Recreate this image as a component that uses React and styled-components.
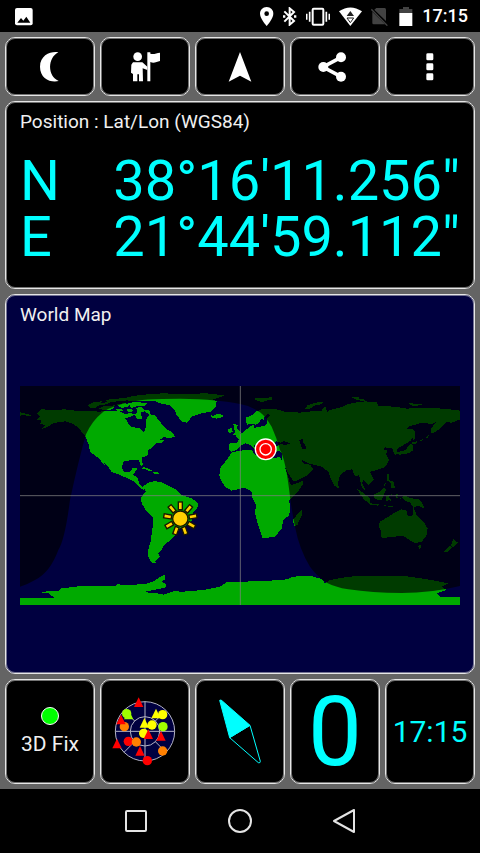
import React from 'react';
import styled, { createGlobalStyle, css } from 'styled-components';

const colors = {
  black: '#000',
  white: '#fff',
  text: '#f0f0f0',
  frame: '#646464',
  border: '#e6e6e6',
  cyan: '#0ff',
  navy: '#000040',
  land: '#00aa00',
  dim: '#424242'
};
const fonts = { Roboto: "Roboto, 'Open Sans', sans-serif" };

const GlobalStyle = createGlobalStyle`
  *, *::before, *::after { box-sizing: border-box; }
  body {
    margin: 0;
    background: ${colors.black};
    color: ${colors.text};
    font-family: ${fonts.Roboto};
  }
  button {
    padding: 0;
    border: 0;
    background: none;
    color: inherit;
    font: inherit;
    cursor: pointer;
  }
`;

const Screen = styled.div`
  display: flex;
  flex-direction: column;
  min-height: 100vh;
`;
const StatusBar = styled.header`
  display: flex;
  align-items: center;
  justify-content: space-between;
  height: 32px;
  padding: 0 12px 0 15px;
`;
const StatusIcons = styled.div`
  display: flex;
  align-items: center;
  gap: 9px;
`;
const Clock = styled.time`
  color: ${colors.white};
  font-size: 18px;
  font-weight: 500;
  line-height: 24px;
`;
const Main = styled.main`
  display: flex;
  flex-direction: column;
  flex: 1;
  gap: 5px;
  padding: 5px;
  background: ${colors.frame};
`;
const Row = styled.div`
  display: grid;
  grid-template-columns: repeat(5, 1fr);
  gap: 5px;
`;
const frame = css`
  border: 1px solid ${colors.border};
  border-radius: 10px;
  box-shadow: inset 0 0 0 1px rgba(230, 230, 230, 0.5);
`;
const Tile = styled.button`
  && {
    ${frame};
    display: flex;
    flex-direction: column;
    align-items: center;
    justify-content: center;
    height: ${props => (props.$tall ? 105 : 59)}px;
    background: ${colors.black};
  }
`;
const Panel = styled.section`
  ${frame};
  display: flex;
  flex-direction: column;
  flex: ${props => (props.$grow ? 1 : 'none')};
  padding: ${props => (props.$grow ? '8px 14px 9px' : '8px 14px 23px')};
  background: ${props => (props.$grow ? colors.navy : colors.black)};
`;
const Title = styled.h2`
  margin: 0;
  font-size: 19px;
  font-weight: 400;
  line-height: 24px;
`;
const Coordinates = styled.div`
  margin-top: 19px;
`;
const Coordinate = styled.div`
  display: flex;
  justify-content: space-between;
  color: ${colors.cyan};
  font-size: 56px;
  line-height: 56px;
`;
const MapArea = styled.div`
  display: flex;
  flex: 1;
  align-items: center;
  svg {
    display: block;
    width: 100%;
    height: auto;
  }
`;
const FixDot = styled.span`
  width: 18px;
  height: 18px;
  border: 1px solid ${colors.white};
  border-radius: 50%;
  background: #0f0;
`;
const FixLabel = styled.span`
  margin-top: 7px;
  font-size: 21px;
  line-height: 24px;
`;
const Value = styled.span`
  color: ${colors.cyan};
  font-size: ${props => (props.$large ? 96 : 30)}px;
  line-height: 1;
`;
const NavBar = styled.nav`
  display: flex;
  align-items: center;
  justify-content: center;
  gap: 80px;
  height: 64px;
  button {
    display: flex;
  }
`;

const StatusIcon = ({ width, x, children }) => (
  <svg width={width} height="19" viewBox={`${x} 18 ${width * 3} 57`} aria-hidden="true">
    {children}
  </svg>
);

const ToolIcon = ({ children }) => (
  <svg width="36" height="36" viewBox="-9 -9 108 108" fill={colors.white} aria-hidden="true">
    {children}
  </svg>
);

const tools = [
  {
    name: 'Night mode',
    icon: <path d="M70 1C50-3 15 8 15 44s32 49 56 43C37 72 37 18 70 1Z" />
  },
  {
    name: 'Waypoints',
    icon: (
      <g>
        <circle cx="23" cy="14" r="13" />
        <path d="M9 31H37L52 44V54L38 49L39 88H27V67H22V88H9V66L3 62L4 38Z" />
        <path d="M52 1h9v4c10 4 18-2 29-3v25c-10 2-18 8-29 3v58h-9Z" />
      </g>
    )
  },
  { name: 'Navigate', icon: <path d="M45 0L79 89L45 71L11 89Z" /> },
  {
    name: 'Share',
    icon: (
      <g>
        <path d="M63 16L9 45L63 74" fill="none" stroke={colors.white} strokeWidth="11" />
        <circle cx="63" cy="16" r="15" />
        <circle cx="10" cy="45" r="15" />
        <circle cx="63" cy="74" r="15" />
      </g>
    )
  },
  {
    name: 'Menu',
    icon: [4, 34, 64].map(y => <rect key={y} x="34" y={y} width="21" height="21" rx="4" />)
  }
];

const lands = [
  // North America
  'M50 82L65 70L100 72L135 70L165 74L200 74L235 77L265 75L300 76L318 86L330 80L345 86L352 76L348 66L362 62L372 72L392 74L388 84L404 88L418 104L424 112L440 130L455 137L466 152L445 157L432 153L418 162L435 161L428 169L410 172L395 187L382 194L385 207L365 215L369 238L363 240L357 222L335 222L310 227L305 247L315 259L330 259L337 247L353 245L345 258L340 266L352 275L358 292L368 303L380 293L372 312L365 309L352 298L342 287L320 276L295 265L275 258L262 238L252 230L256 241L243 225L230 212L210 197L205 172L195 150L175 125L160 114L135 106L118 108L100 112L80 124L63 130L75 118L60 112L65 104L50 100L60 92Z',
  'M0 79L12 82L36 88L24 91L12 86L0 90Z',
  // Arctic islands
  'M205 58L215 50L245 46L240 52L268 47L262 55L240 57L225 66L210 67Z',
  'M235 68L250 61L285 58L278 70L255 73Z',
  'M258 42L285 38L330 36L318 44L282 47L262 51Z',
  'M290 56L312 51L330 55L322 63L304 66Z',
  'M325 52L345 48L382 51L376 59L350 61L334 66Z',
  'M288 70L304 68L310 74L294 76ZM318 68L334 70L340 76L326 78Z',
  'M300 40L340 30L390 24L430 22L480 24L560 22L612 28L600 34L575 42L590 44L588 62L575 76L545 82L515 92L502 110L485 107L470 87L465 72L450 58L420 52L405 45L370 44L340 46Z',
  // Caribbean
  'M363 249L372 243L388 249L400 257L386 254L372 248Z',
  'M398 257L412 258L420 262L404 264Z',
  // South America
  'M373 300L385 290L400 286L420 287L440 297L470 312L485 327L515 337L535 352L532 367L518 382L515 405L500 418L480 427L465 450L445 467L430 482L425 492L415 502L420 512L410 522L402 528L417 532L395 530L383 510L385 490L392 465L397 432L400 394L380 377L365 352L363 335L377 317Z',
  // Africa and Madagascar
  'M635 200L655 194L695 192L705 207L735 217L780 214L788 227L798 252L810 292L815 297L848 285L850 292L830 322L808 342L810 377L805 390L790 402L785 427L765 452L728 457L720 432L710 402L705 382L708 357L695 332L695 317L675 305L635 314L615 302L602 282L598 267L602 244L620 222Z',
  'M845 372L846 387L832 417L822 422L819 402L832 384Z',
  // Europe and Asia
  'M628 193V173L650 170L658 160L645 150L665 142L680 130L690 122L702 116L702 126L722 122L738 118L742 106L724 98L716 112L706 116L696 114L680 116L678 95L695 88L710 76L725 70L750 68L770 70L795 77L840 80L865 77L905 74L915 60L922 78L930 72L960 65L980 56L1005 50L1035 46L1070 49L1075 60L1125 62L1160 68L1195 66L1255 67L1290 70L1320 74V100L1295 110L1278 108L1258 130L1242 140L1232 140L1234 126L1250 107L1235 114L1205 110L1165 122L1160 130L1180 130L1183 146L1172 164L1150 177L1130 190L1135 204L1124 206L1117 187L1095 184L1090 190L1102 194L1098 204L1107 222L1095 244L1070 252L1050 257L1062 282L1045 297L1030 282L1026 290L1038 314L1026 306L1017 267L1005 272L997 250L980 252L960 267L953 297L943 301L930 272L925 257L905 242L865 232L845 222L850 232L870 236L880 250L862 268L830 284L820 285L805 262L790 232L785 215V200L778 196L745 198L730 190L718 196L700 172L706 190L690 176L675 172L660 180L650 192L635 197Z',
  'M640 115L655 116L650 126L664 140L658 146L636 148L645 138Z',
  'M624 130L636 126L638 138L626 142Z',
  'M570 86L580 90L590 84L606 86L610 92L590 98L576 96Z',
  'M700 38L720 36L756 34L758 40L738 44L728 49L712 44Z',
  'M855 68L862 58L885 50L912 48L905 54L880 60L868 70Z',
  'M995 34L1015 32L1018 38L1040 42L1030 46L1008 41Z',
  'M1165 50L1188 54L1210 54L1200 58L1180 60L1170 56Z',
  'M1178 130L1186 136V158L1180 162L1177 146Z',
  'M1130 200L1142 196L1158 192L1165 180L1173 174L1180 178L1178 194L1166 202L1145 204L1138 208Z',
  'M1175 170L1190 166L1192 171L1178 175ZM1198 164L1208 160L1206 166ZM1216 156L1226 148L1224 156Z',
  // South East Asia and Oceania
  'M948 294L958 300L957 307L950 305Z',
  'M1010 307L1025 317L1050 337V352L1035 344L1020 324Z',
  'M1048 352L1076 354L1075 359L1050 356ZM1090 358L1124 360L1112 364Z',
  'M1060 327L1080 317L1093 304L1098 312L1092 326L1085 342L1065 340Z',
  'M1098 330L1118 324L1106 332L1116 346L1106 342L1100 348Z',
  'M1100 262L1108 267L1107 282L1120 287L1125 307L1113 305L1114 292L1102 284ZM1090 298L1098 290L1094 300Z',
  'M1126 326L1134 324L1132 334L1144 338L1128 336Z',
  'M1145 332L1158 330L1170 336L1195 340L1207 352L1213 367L1195 360L1180 364L1170 350L1152 342Z',
  'M1075 417L1080 407L1105 392L1120 382L1145 370L1160 374L1162 388L1177 392L1180 362L1190 387L1210 407L1223 427L1220 447L1205 467L1185 472L1165 460L1150 450L1120 452L1085 457L1083 437Z',
  'M1193 479L1205 477L1200 490Z',
  'M1300 460L1306 466L1314 470L1300 484L1292 479Z',
  'M1290 480L1298 484L1284 498L1271 498Z',
  // Antarctica
  'M0 637L105 637L85 622L65 620L90 614L112 616L125 607L185 600L285 600L295 593L305 598L325 597L375 594L400 586L425 570L435 566V580L424 588L440 594L436 604L412 611L380 616L430 626L460 616L490 617L550 612L600 602L620 589L750 584L800 580L820 572L870 569L905 579L915 592L930 582L985 572L1055 569L1155 570L1235 582L1285 592L1265 602L1280 612L1250 622L1262 632L1320 634V657H0Z'
];

// inland seas, painted over the land
const seas = [
  'M316 97L332 92L342 86L352 98L366 98L362 80L374 76L388 86L378 100L379 122L371 140L362 128L330 121Z',
  'M764 172L770 166L782 170L792 165L812 172L800 176L780 175L770 180Z',
  'M838 162L850 157L848 168L856 178L858 190L846 188Z',
  'M732 96L744 82L750 90L740 100L742 112L730 112Z',
  'M372 618L412 610L436 614L425 620L400 622Z'
];

const WorldMap = () => (
  <svg viewBox="0 0 1320 657" role="img" aria-label="World Map">
    <g shapeRendering="crispEdges">
      <path d="M0 0H1320V657H0Z" fill={colors.navy} />
      <path d={lands.join('')} fill={colors.land} />
      <path d={seas.join('')} fill={colors.navy} />
    </g>
    <path
      d="M0 0H1320V600Q1235 621 1145 621T985 610Q945 603 920 590Q890 570 870 542Q838 490 825 422Q816 380 810 332Q797 220 780 192Q770 155 755 122Q735 90 720 79Q690 58 660 54Q600 40 480 38Q360 38 335 48Q280 58 250 77Q215 105 198 145Q175 225 150 342Q135 460 115 492Q90 560 45 582Q25 594 0 602Z"
      fill="#000"
      fillOpacity="0.65"
    />
    <path d="M0 329H1320M661 0V657" stroke="#808080" strokeWidth="3" strokeOpacity="0.75" />
    <g transform="translate(481 398)" fill="#ffd000" stroke="#181400" strokeWidth="4">
      {[0, 40, 80, 120, 160, 200, 240, 280, 320].map(angle => (
        <rect key={angle} x="-6" y="-50" width="12" height="23" transform={`rotate(${angle})`} />
      ))}
      <circle r="23" />
    </g>
    <g transform="translate(737 190)" fill="#f00" stroke="#fff" strokeWidth="4">
      <circle r="31" />
      <circle r="17" />
    </g>
  </svg>
);

const satellites = [
  { x: 380, y: 145, color: '#a0ff00' },
  { x: 488, y: 148, color: '#ff0' },
  { x: 373, y: 184, color: '#ff8000' },
  { x: 456, y: 179, color: '#ff0' },
  { x: 489, y: 184, color: '#a0ff00' },
  { x: 431, y: 204, color: '#ff0' },
  { x: 385, y: 228, color: '#f00' },
  { x: 409, y: 230, color: '#ff8000' },
  { x: 488, y: 257, color: '#ff8000' },
  { x: 442, y: 286, color: '#f00' }
];
const beacons = [
  { x: 416, y: 111, color: '#f00' },
  { x: 386, y: 148, color: '#a0ff00' },
  { x: 363, y: 163, color: '#f00' },
  { x: 468, y: 145, color: '#ff0' },
  { x: 433, y: 173, color: '#ff0' },
  { x: 445, y: 207, color: '#f00' },
  { x: 483, y: 212, color: '#f00' },
  { x: 351, y: 235, color: '#f00' },
  { x: 420, y: 257, color: '#f00' }
];

const SkyPlot = () => (
  <svg width="72" height="72" viewBox="327 92 216 216" aria-hidden="true">
    <g fill="none" stroke="#b4b4c4" strokeWidth="3">
      <circle cx="435" cy="198" r="89" fill={colors.navy} />
      <circle cx="435" cy="198" r="44" />
      <path d="M346 198H524M435 109V287M372 135L404 167M466 229L498 261M404 229L372 261M466 167L498 135" />
    </g>
    {satellites.map(({ x, y, color }) => (
      <circle key={`${x}-${y}`} cx={x} cy={y} r="14" fill={color} />
    ))}
    {beacons.map(({ x, y, color }) => (
      <path key={`${x}-${y}`} d={`M${x} ${y - 15}l14 29h-28Z`} fill={color} />
    ))}
  </svg>
);

const Compass = () => (
  <svg width="72" height="72" viewBox="27 47 216 216" aria-hidden="true">
    <g stroke={colors.cyan} strokeWidth="3" strokeLinejoin="round">
      <path d="M104 172L190 247Q196 249 196 243L165 135Z" fill="none" />
      <path d="M74 60Q78 57 82 62L165 135L104 172Z" fill={colors.cyan} />
    </g>
  </svg>
);

const App = () => (
  <Screen>
    <GlobalStyle />
    <StatusBar>
      <StatusIcon width={18} x={45}>
        <rect x="45" y="21" width="53" height="52" rx="6" fill="#fff" />
        <path d="M52 65L63 51L70 59L79 47L91 65Z" fill="#000" />
      </StatusIcon>
      <StatusIcons>
        <StatusIcon width={14} x={62}>
          <path d="M82 18C70 18 62 27 62 38C62 53 82 75 82 75S102 53 102 38C102 27 94 18 82 18Z" fill="#fff" />
          <circle cx="82" cy="38" r="7" fill="#000" />
        </StatusIcon>
        <StatusIcon width={14} x={134}>
          <path d="M138 31L167 60L154 71V22L167 33L138 62" fill="none" stroke="#fff" strokeWidth="6" />
          <path d="M134 43h7v7h-7ZM167 43h7v7h-7Z" fill="#fff" />
        </StatusIcon>
        <StatusIcon width={24} x={201}>
          <rect x="221" y="23" width="32" height="48" rx="3" fill="none" stroke="#fff" strokeWidth="6" />
          <path d="M203 38V56M212 32V62M262 32V62M271 38V56" stroke="#fff" strokeWidth="5" />
        </StatusIcon>
        <StatusIcon width={23} x={297}>
          <path d="M297 31Q331 8 366 31L331 75Z" fill="#fff" />
          <path d="M320 45L331 30L342 45Z" fill="#222" />
          <path d="M321 51H341L331 65Z" fill="#fff" stroke="#222" strokeWidth="3" />
        </StatusIcon>
        <StatusIcon width={19} x={393}>
          <path d="M409 21H434Q438 21 438 26V60L403 26ZM397 32L435 70H401Q397 70 397 66Z" fill={colors.dim} />
          <path d="M394 25L442 74" stroke={colors.dim} strokeWidth="4" />
        </StatusIcon>
        <StatusIcon width={14} x={478}>
          <path d="M490 18H508V24H518V36H479V24H490Z" fill={colors.dim} />
          <path d="M479 36H518V75H479Z" fill="#fff" />
        </StatusIcon>
        <Clock>17:15</Clock>
      </StatusIcons>
    </StatusBar>
    <Main>
      <Row>
        {tools.map(({ name, icon }) => (
          <Tile key={name} aria-label={name}>
            <ToolIcon>{icon}</ToolIcon>
          </Tile>
        ))}
      </Row>
      <Panel>
        <Title>Position : Lat/Lon (WGS84)</Title>
        <Coordinates>
          <Coordinate>
            <span>N</span>
            <span>38°16'11.256"</span>
          </Coordinate>
          <Coordinate>
            <span>E</span>
            <span>21°44'59.112"</span>
          </Coordinate>
        </Coordinates>
      </Panel>
      <Panel $grow>
        <Title>World Map</Title>
        <MapArea>
          <WorldMap />
        </MapArea>
      </Panel>
      <Row>
        <Tile $tall>
          <FixDot />
          <FixLabel>3D Fix</FixLabel>
        </Tile>
        <Tile $tall aria-label="Satellites">
          <SkyPlot />
        </Tile>
        <Tile $tall aria-label="Compass">
          <Compass />
        </Tile>
        <Tile $tall>
          <Value $large>0</Value>
        </Tile>
        <Tile $tall>
          <Value>17:15</Value>
        </Tile>
      </Row>
    </Main>
    <NavBar>
      <button aria-label="Recent apps">
        <svg width="24" height="24" viewBox="0 0 24 24" fill="none" stroke="#e4e4e4" strokeWidth="2">
          <rect x="2" y="2" width="20" height="20" rx="1" />
        </svg>
      </button>
      <button aria-label="Home">
        <svg width="24" height="24" viewBox="0 0 24 24" fill="none" stroke="#e4e4e4" strokeWidth="2">
          <circle cx="12" cy="12" r="11" />
        </svg>
      </button>
      <button aria-label="Back">
        <svg width="24" height="24" viewBox="0 0 24 24" fill="none" stroke="#e4e4e4" strokeWidth="2" strokeLinejoin="round">
          <path d="M2 12L22 1V23Z" />
        </svg>
      </button>
    </NavBar>
  </Screen>
);

export default App;
